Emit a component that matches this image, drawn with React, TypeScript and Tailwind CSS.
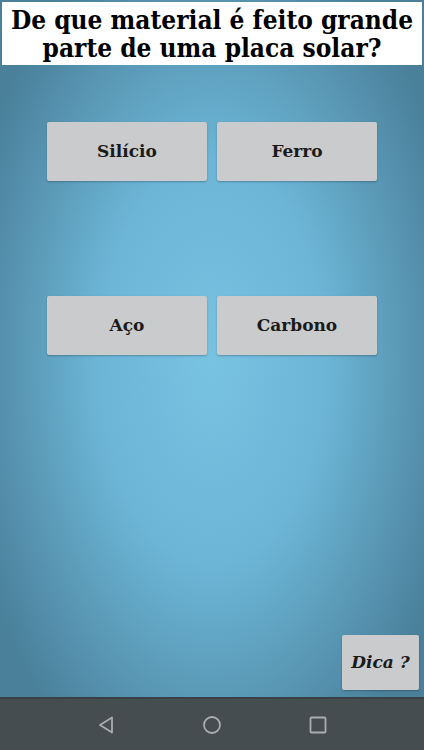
const answers = ["Silício", "Ferro", "Aço", "Carbono"]

function NavBar() {
  return (
    <div className="flex h-[53px] items-center justify-center gap-[88px] border-t-2 border-[#3a4144] bg-[#464d51]">
      <svg width="18" height="18" viewBox="0 0 18 18" fill="none" stroke="#a9adaf" strokeWidth="1.8">
        <path d="M15 1.5 L3 9 L15 16.5 Z" strokeLinejoin="round" />
      </svg>
      <svg width="18" height="18" viewBox="0 0 18 18" fill="none" stroke="#a9adaf" strokeWidth="1.8">
        <circle cx="9" cy="9" r="8" />
      </svg>
      <svg width="18" height="18" viewBox="0 0 18 18" fill="none" stroke="#a9adaf" strokeWidth="1.8">
        <rect x="1.5" y="1.5" width="15" height="15" rx="1" />
      </svg>
    </div>
  )
}

export default function App() {
  return (
    <div
      className="flex h-[750px] w-[424px] flex-col overflow-hidden"
      style={{ fontFamily: '"DejaVu Serif", serif' }}
    >
      <main className="flex flex-1 flex-col bg-[radial-gradient(ellipse_60%_65%_at_50%_52%,#78c2e2_0%,#6cb5d6_45%,#4a809a_100%)] px-[2px] pt-[2px]">
        <h1 className="h-[63px] overflow-hidden bg-white pt-[5px] text-center font-['DejaVu_Serif_Condensed','Liberation_Serif',serif] text-[26px] font-bold leading-[27.5px] text-black">
          De que material é feito grande parte de uma placa solar?
        </h1>

        <div className="mx-auto mt-[57px] grid w-[330px] grid-cols-2 gap-x-[10px] gap-y-[115px]">
          {answers.map((a) => (
            <button
              key={a}
              type="button"
              className="h-[59px] rounded-[2px] bg-[#c9cbcc] text-[17px] font-bold text-[#1a1a1a] shadow-[0_1px_2px_rgba(0,0,0,0.25)]"
            >
              {a}
            </button>
          ))}
        </div>

        <div className="mt-auto mb-[7px] flex justify-end pr-[3px]">
          <button
            type="button"
            className="h-[55px] w-[77px] rounded-[2px] bg-[#c9cbcc] text-[17px] font-bold italic text-[#1a1a1a] shadow-[0_1px_2px_rgba(0,0,0,0.25)]"
          >
            Dica ?
          </button>
        </div>
      </main>
      <NavBar />
    </div>
  )
}
